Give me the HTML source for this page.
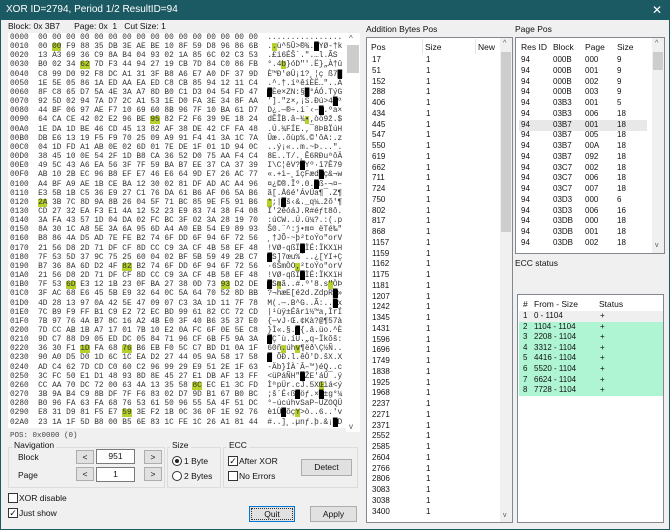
<!DOCTYPE html>
<html><head><meta charset="utf-8"><style>
*{margin:0;padding:0;box-sizing:border-box}
body{width:670px;height:530px;background:#f0f0f0;font-family:"Liberation Sans",sans-serif;font-size:8.5px;color:#111;position:relative;overflow:hidden}
.a{position:absolute}
#title{left:0;top:0;width:670px;height:20px;background:#1c5a63;color:#fff;font-size:10px;line-height:20px;padding-left:6px}
#frame{left:0;top:20px;width:670px;height:510px;border:1px solid #1c5a63;border-top:none}
#hex{left:8px;top:33px;width:338px;height:395px;background:#fff;overflow:hidden}
#hex pre{position:absolute;left:2px;top:1px;font-family:"Liberation Mono",monospace;font-size:7.8px;line-height:9.15px;color:#333;white-space:pre}
.h{background:#b5d12c}
.k{background:#000;color:#000}
.sb{background:#fff}
.th{background:#cdcdcd}
.grp{border:1px solid #dcdcdc}
.lbl{background:#f0f0f0;padding:0 2px}
.btn{background:#e1e1e1;border:1px solid #adadad;text-align:center}
.inp{background:#fff;border:1px solid #7a7a7a;text-align:center}
.cb{width:10px;height:10px;border:1px solid #333;background:#fff}
.list{background:#fff;border:1px solid #828790}
.col{font-size:8px;line-height:10.75px;white-space:pre}
</style></head><body>
<div class="a" id="frame"></div>
<div class="a" id="title">XOR ID=2794, Period 1/2 ResultID=94</div>
<div class="a" style="left:652px;top:3px;color:#fff;font-size:12px">✕</div>
<div class="a" style="left:8px;top:21px;line-height:11px">Block: 0x 3B7 &nbsp;&nbsp;&nbsp;&nbsp; Page: 0x &nbsp;1 &nbsp;&nbsp;Cut Size: 1</div>
<div class="a" id="hex"><pre>0000  00 00 00 00 00 00 00 00 00 00 00 00 00 00 00 00  ................
0010  00 <span class="h">00</span> F9 88 35 DB 3E AE BE 10 8F 59 D8 96 86 6B  .<span class="h">.</span>ù^5Û&gt;®¾.<span class="k">█</span>YØ-†k
0020  13 A3 69 36 C9 8A B4 04 93 02 1A 85 6C 02 C3 53  .£i6ÉŠ´.".…l.ÃS
0030  B0 02 34 <span class="h">62</span> 7D F3 44 94 27 19 CB 7D 84 C0 86 FB  °.4<span class="h">b</span>}óD"'.Ë}„À†û
0040  C8 99 D0 92 F8 DC A1 31 3F B8 A6 E7 A0 DF 37 9D  È™Ð'øÜ¡1?¸¦ç ß7<span class="k">█</span>
0050  1E 5E 05 86 1A ED AA EA ED C8 CB 85 94 12 11 C4  .^.†.íªêíÈË…"..Ä
0060  8F C8 65 D7 5A 4E 3A A7 8D B0 C1 D3 04 54 FD 47  <span class="k">█</span>Èe×ZN:§<span class="k">█</span>°ÁÓ.TýG
0070  92 5D 02 94 7A D7 2C A1 53 1E D0 FA 3E 34 8F AA  '].″z×,¡S.Ðú&gt;4<span class="k">█</span>ª
0080  44 BF 06 97 AE F7 10 69 60 8B 96 7F 10 BA 61 D7  D¿.—®÷.i`‹–<span class="k">█</span>.ºa×
0090  64 CA CE 42 02 E2 96 BE <span class="h">95</span> 82 F2 F6 39 9E 18 24  dÊÎB.â–¾<span class="h">•</span>‚òö9ž.$
00A0  1E DA 1D BE 46 CD 45 13 82 AF 38 DE 42 CF FA 48  .Ú.¾FÍE.‚¯8ÞBÏúH
00B0  DB E6 13 19 F5 F9 70 25 09 A9 91 F4 41 3A 1C 7A  Ûæ..õùp%.©'ôA:.z
00C0  04 1D FD A1 AB 0E 02 6D 01 7E DE 1F 01 1D 94 0C  ..ý¡«..m.~Þ...".
00D0  38 45 10 0E 54 2F 1D B8 CA 36 52 D0 75 AA F4 C4  8E..T/.¸Ê6RÐuªôÄ
00E0  49 5C 43 A6 EA 56 3F 7F 59 BA B7 EE 37 CA 37 39  I\C¦êV?<span class="k">█</span>Yº·î7Ê79
00F0  AB 10 2B EC 96 B8 EF E7 46 E6 64 9D E7 26 AC 77  «.+ì–¸ïçFæd<span class="k">█</span>ç&amp;¬w
0100  A4 BF A9 AE 1B CE BA 12 30 02 81 DF AD AC A4 96  ¤¿©®.Îº.0.<span class="k">█</span>ß-¬¤–
0110  E3 5B 1B C5 36 E9 27 C1 76 DA 61 B6 AF 06 5A B6  ã[.Å6é'ÁvÚa¶¯.Z¶
0120  <span class="h">2A</span> 3B 7C 8D 9A 8B 26 04 5F 71 BC 85 9E F5 91 B6  <span class="h">*</span>;|<span class="k">█</span>š‹&amp;._q¼…žõ'¶
0130  CD 27 32 EA F3 E1 4A 12 52 23 E9 83 74 38 F4 08  Í'2êóáJ.R#éƒt8ô.
0140  3A FA 43 57 1D 04 DA 02 FC BC 3F 02 3A 28 19 70  :úCW..Ú.ü¼?.:(.p
0150  8A 30 1C A8 5E 3A 6A 95 6D A4 A0 EB 54 E9 89 93  Š0.¨^:j•m¤ ëTé‰"
0160  B8 86 4A D5 AD 7E FE B2 74 6F DD 6F 94 6F 72 56  ¸†JÕ-~þ²toÝo"orV
0170  21 56 D8 2D 71 DF CF 8D CC C9 3A CF 4B 58 EF 48  !VØ-qßÏ<span class="k">█</span>ÌÉ:ÏKXïH
0180  7F 53 5D 37 9C 75 25 60 04 02 BF 5B 59 49 2B C7  <span class="k">█</span>S]7œu%`..¿[YI+Ç
0190  B7 36 8A 6D D2 4F <span class="h">82</span> B2 74 6F DD 6F 94 6F 72 56  ·6ŠmÒO<span class="h">‚</span>²toÝo"orV
01A0  21 56 D8 2D 71 DF CF 8D CC C9 3A CF 4B 58 EF 48  !VØ-qßÏ<span class="k">█</span>ÌÉ:ÏKXïH
01B0  7F 53 <span class="h">6D</span> E3 12 1B 23 0F BA 27 38 0D 73 <span class="h">93</span> D2 DE  <span class="k">█</span>S<span class="h">m</span>ã..#.º'8.s<span class="h">"</span>ÒÞ
01C0  3F AC 68 E6 45 5B E9 32 64 0C 5A 64 70 52 8D BB  ?¬hæE[é2d.ZdpR<span class="k">█</span>»
01D0  4D 28 13 97 0A 42 5E 47 09 07 C3 3A 1D 11 7F 78  M(.—.B^G..Ã:..<span class="k">█</span>x
01E0  7C B9 F9 FF B1 C9 E2 72 EC BD 99 61 82 CC 72 CD  |¹ùÿ±Éârì½™a‚ÌrÍ
01F0  7B 97 76 4A B7 8C 16 A2 4B E0 3F 40 B6 35 37 E0  {—vJ·Œ.¢Kà?@¶57à
0200  7D CC AB 1B A7 17 01 7B 10 E2 0A FC 6F 0E 5E C8  }Ì«.§.<span class="k">█</span>{.â.üo.^È
0210  9D C7 88 D9 05 ED DC 05 84 71 96 CF 6B F5 9A 3A  <span class="k">█</span>Çˆù.íÜ.„q–Ïkõš:
0220  36 30 F1 <span class="h">1D</span> FA 68 <span class="h">76</span> B6 EB F0 5C C7 BD D1 0A 1F  60ñ<span class="h">.</span>úh<span class="h">v</span>¶ëð\Ç½Ñ..
0230  90 A0 D5 D0 1D 6C 1C EA D2 27 44 05 9A 58 17 58  <span class="k">█</span> ÕÐ.l.êÒ'D.šX.X
0240  AD C4 62 7D CD C0 60 C2 96 99 29 E9 51 2E 1F 63  -Äb}ÍÀ`Â–™)éQ..c
0250  3C FC 50 E1 D1 48 93 8D 8E 45 27 E1 DB AF 13 FF  &lt;üPáÑH"<span class="k">█</span>ŽE'áÛ¯.ÿ
0260  CC AA 70 DC 72 00 63 4A 13 35 58 <span class="h">8C</span> EC E1 3C FD  ÌªpÜr.cJ.5X<span class="h">Œ</span>ìá&lt;ý
0270  3B 9A B4 C9 8B DF 7F F6 83 02 D7 9D B1 67 B0 BC  ;š´É‹ß<span class="k">█</span>öƒ.×<span class="k">█</span>±g°¼
0280  B0 96 FA 63 FA 68 76 53 61 50 96 55 5A 4F 51 DC  °–úcúhvSaP–UZOQÜ
0290  E8 31 D9 81 F5 E7 <span class="h">59</span> 3E F2 1B 0C 36 0F 1E 92 76  è1Ù<span class="k">█</span>õç<span class="h">Y</span>&gt;ò..6..'v
02A0  23 1A 1F 5D B8 00 B5 6E 83 1C FE 1C 26 A1 81 44  #..]¸.µnƒ.þ.&amp;¡<span class="k">█</span>D</pre></div>
<div class="a sb" style="left:346px;top:33px;width:14px;height:399px"></div>
<div class="a th" style="left:347px;top:45px;width:12px;height:28px"></div>
<div class="a" style="left:349px;top:34px;font-size:8px;color:#555">^</div>
<div class="a" style="left:349px;top:422px;font-size:8px;color:#555">v</div>
<div class="a" style="left:10px;top:432px;font-family:'Liberation Mono',monospace;font-size:7.5px;color:#444">POS: 0x0000 (0)</div>

<div class="a grp" style="left:8px;top:447px;width:157px;height:41px"></div>
<div class="a lbl" style="left:12px;top:440px">Navigation</div>
<div class="a" style="left:18px;top:452px">Block</div>
<div class="a" style="left:18px;top:470px">Page</div>
<div class="a btn" style="left:76px;top:450px;width:18px;height:14px;line-height:12px">&lt;</div>
<div class="a btn" style="left:76px;top:467px;width:18px;height:14px;line-height:12px">&lt;</div>
<div class="a inp" style="left:96px;top:449px;width:39px;height:15px;line-height:13px">951</div>
<div class="a inp" style="left:96px;top:467px;width:39px;height:15px;line-height:13px">1</div>
<div class="a btn" style="left:144px;top:450px;width:18px;height:14px;line-height:12px">&gt;</div>
<div class="a btn" style="left:144px;top:467px;width:18px;height:14px;line-height:12px">&gt;</div>

<div class="a grp" style="left:167px;top:447px;width:54px;height:41px"></div>
<div class="a lbl" style="left:170px;top:440px">Size</div>
<div class="a" style="left:172px;top:456px;width:10px;height:10px;border:1px solid #333;border-radius:50%;background:#fff"><div style="margin:2px;width:4px;height:4px;border-radius:50%;background:#222"></div></div>
<div class="a" style="left:184px;top:456px">1 Byte</div>
<div class="a" style="left:172px;top:471px;width:10px;height:10px;border:1px solid #333;border-radius:50%;background:#fff"></div>
<div class="a" style="left:184px;top:471px">2 Bytes</div>

<div class="a grp" style="left:223px;top:447px;width:135px;height:41px"></div>
<div class="a lbl" style="left:227px;top:440px">ECC</div>
<div class="a cb" style="left:228px;top:456px;font-size:9px;line-height:8px;text-align:center">✓</div>
<div class="a" style="left:239px;top:456px">After XOR</div>
<div class="a cb" style="left:228px;top:471px"></div>
<div class="a" style="left:239px;top:471px">No Errors</div>
<div class="a btn" style="left:301px;top:459px;width:51px;height:17px;line-height:15px">Detect</div>

<div class="a cb" style="left:8px;top:493px"></div>
<div class="a" style="left:19px;top:493px">XOR disable</div>
<div class="a cb" style="left:8px;top:508px;font-size:9px;line-height:8px;text-align:center">✓</div>
<div class="a" style="left:19px;top:508px">Just show</div>
<div class="a btn" style="left:249px;top:506px;width:46px;height:16px;line-height:14px;border:1px solid #0078d7;outline:1px dotted #333;outline-offset:-3px">Quit</div>
<div class="a btn" style="left:310px;top:506px;width:47px;height:16px;line-height:14px">Apply</div>

<div class="a" style="left:366px;top:24px">Addition Bytes Pos</div>
<div class="a list" style="left:366px;top:37px;width:147px;height:486px;overflow:hidden">
<div class="a" style="left:4px;top:4px">Pos</div><div class="a" style="left:58px;top:4px">Size</div><div class="a" style="left:111px;top:4px">New</div>
<div class="a" style="left:55px;top:1px;width:1px;height:15px;background:#e5e5e5"></div>
<div class="a" style="left:108px;top:1px;width:1px;height:15px;background:#e5e5e5"></div>
<div class="a col" style="left:5px;top:17px">17
51
152
288
406
434
445
547
550
619
662
711
724
750
802
817
868
1157
1159
1162
1175
1181
1207
1242
1345
1431
1596
1696
1749
1838
1925
1968
2237
2271
2371
2552
2585
2604
2766
2806
3083
3038
3400</div>
<div class="a col" style="left:59px;top:17px">1
1
1
1
1
1
1
1
1
1
1
1
1
1
1
1
1
1
1
1
1
1
1
1
1
1
1
1
1
1
1
1
1
1
1
1
1
1
1
1
1
1
1</div>
<div class="a" style="left:133px;top:0;width:12px;height:484px;background:#f0f0f0"></div>
<div class="a th" style="left:134px;top:14px;width:10px;height:180px"></div>
<div class="a" style="left:136px;top:2px;font-size:7px;color:#555">^</div>
<div class="a" style="left:136px;top:474px;font-size:7px;color:#555">v</div>
</div>

<div class="a" style="left:515px;top:24px">Page Pos</div>
<div class="a list" style="left:515px;top:37px;width:150px;height:217px;overflow:hidden">
<div class="a" style="left:5px;top:4px">Res ID</div><div class="a" style="left:37px;top:4px">Block</div><div class="a" style="left:69px;top:4px">Page</div><div class="a" style="left:101px;top:4px">Size</div>
<div class="a" style="left:3px;top:81.5px;width:128px;height:11px;background:#e8e8e8"></div>
<div class="a col" style="left:5px;top:17px">94
94
94
94
94
94
94
94
94
94
94
94
94
94
94
94
94
94</div>
<div class="a col" style="left:37px;top:17px">000B
000B
000B
000B
03B3
03B3
03B7
03B7
03B7
03B7
03C7
03C7
03C7
03D3
03D3
03DB
03DB
03DB</div>
<div class="a col" style="left:69px;top:17px">000
001
002
003
001
006
001
005
00A
092
002
006
007
000
006
000
001
002</div>
<div class="a col" style="left:101px;top:17px">9
9
9
9
5
18
18
18
18
18
18
18
18
6
16
18
18
18</div>
<div class="a" style="left:136px;top:0;width:12px;height:215px;background:#f0f0f0"></div>
<div class="a th" style="left:137px;top:14px;width:10px;height:18px"></div>
<div class="a" style="left:139px;top:2px;font-size:7px;color:#555">^</div>
<div class="a" style="left:139px;top:204px;font-size:7px;color:#555">v</div>
</div>

<div class="a" style="left:515px;top:258px">ECC status</div>
<div class="a list" style="left:517px;top:294px;width:147px;height:229px;overflow:hidden">
<div class="a" style="left:5px;top:4px">#</div><div class="a" style="left:16px;top:4px">From - Size</div><div class="a" style="left:81px;top:4px">Status</div>
<div class="a" style="left:1px;top:16px;width:144px;height:10.6px;background:#efefef"></div>
<div class="a" style="left:1px;top:26.6px;width:144px;height:74.2px;background:#aff5d4"></div>
<div class="a col" style="left:5px;top:16px;line-height:10.6px">1
2
3
4
5
6
7
8</div>
<div class="a col" style="left:16px;top:16px;line-height:10.6px">0 - 1104
1104 - 1104
2208 - 1104
3312 - 1104
4416 - 1104
5520 - 1104
6624 - 1104
7728 - 1104</div>
<div class="a col" style="left:82px;top:16px;line-height:10.6px">+
+
+
+
+
+
+
+</div>
</div>
</body></html>
